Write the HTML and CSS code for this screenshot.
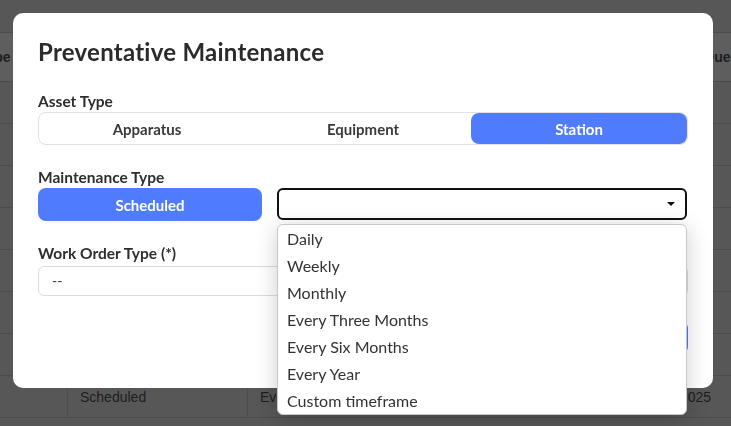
FILE: index.html
```html
<!DOCTYPE html>
<html lang="en">
<head>
    <meta charset="UTF-8">
    <meta name="viewport" content="width=device-width, initial-scale=1.0">
    <title>Preventative Maintenance</title>
    <link rel="stylesheet" href="styles.css">
</head>
<body>
    <table class="pm-table">
        <colgroup>
            <col class="col-type">
            <col class="col-maint">
            <col class="col-freq">
            <col class="col-asset">
            <col class="col-due">
        </colgroup>
        <thead>
            <tr>
                <th class="th-type">Type</th>
                <th>Maintenance</th>
                <th>Frequency</th>
                <th>Asset</th>
                <th class="th-due">Next PM Due</th>
            </tr>
        </thead>
        <tbody>
            <tr><td></td><td>Scheduled</td><td>Every Month</td><td>Engine 1</td><td>01/04/2025</td></tr>
            <tr><td></td><td>Scheduled</td><td>Every Year</td><td>Ladder 2</td><td>02/11/2025</td></tr>
            <tr><td></td><td>Scheduled</td><td>Weekly</td><td>Station 3</td><td>01/09/2025</td></tr>
            <tr><td></td><td>Scheduled</td><td>Every Six Months</td><td>SCBA Pack</td><td>03/01/2025</td></tr>
            <tr><td></td><td>Scheduled</td><td>Monthly</td><td>Rescue 5</td><td>01/20/2025</td></tr>
            <tr><td></td><td>Scheduled</td><td>Daily</td><td>Station 1</td><td>01/02/2025</td></tr>
            <tr><td></td><td>Scheduled</td><td>Every Three Months</td><td>Tanker 4</td><td>04/15/2025</td></tr>
            <tr><td></td><td>Scheduled</td><td>Every Year</td><td>Engine 7</td><td>06/30/2025</td></tr>
        </tbody>
    </table>

    <div class="modal">
        <h2 class="modal-title">Preventative Maintenance</h2>

        <label class="field-label">Asset Type</label>
        <div class="segmented">
            <button class="seg-btn">Apparatus</button>
            <button class="seg-btn">Equipment</button>
            <button class="seg-btn active">Station</button>
        </div>

        <label class="field-label mt">Maintenance Type</label>
        <div class="maint-row">
            <button class="pill-btn">Scheduled</button>
            <div class="select-wrap">
                <div class="select-box">
                    <span class="caret"></span>
                </div>
                <ul class="dropdown">
                    <li>Daily</li>
                    <li>Weekly</li>
                    <li>Monthly</li>
                    <li>Every Three Months</li>
                    <li>Every Six Months</li>
                    <li>Every Year</li>
                    <li>Custom timeframe</li>
                </ul>
            </div>
        </div>

        <label class="field-label mt wo">Work Order Type (*)</label>
        <div class="text-select">--</div>

        <div class="modal-footer">
            <button class="save-btn">Save</button>
        </div>
    </div>
</body>
</html>
```

FILE: styles.css
```css
body {
    margin: 0;
    background-color: #575757;
    font-family: "Liberation Sans", Arial, sans-serif;
    overflow: hidden;
    height: 426px;
}
.pm-table {
    border-collapse: collapse;
    table-layout: fixed;
    width: 805px;
    margin-top: 32px;
    margin-left: -37px;
    font-size: 14px;
    color: #1e1e1e;
}
.col-type { width: 104px; }
.col-maint { width: 180px; }
.col-freq { width: 201px; }
.col-asset { width: 180px; }
.col-due { width: 140px; }
.pm-table th,
.pm-table td {
    text-align: left;
    padding: 0 12px;
    border-bottom: 1px solid #4c4c4c;
    border-left: 1px solid #4c4c4c;
    white-space: nowrap;
    overflow: hidden;
}
.pm-table th {
    height: 48px;
    background-color: #5e5e5e;
    border-top: 1px solid #4c4c4c;
    font-weight: bold;
}
.pm-table th.th-type {
    padding-left: 15px;
}
.pm-table th.th-due {
    padding-left: 16px;
}
.pm-table td {
    height: 41px;
}

.modal {
    position: fixed;
    left: 13px;
    top: 13px;
    width: 650px;
    padding: 24px 25px 35px;
    background: #fff;
    border-radius: 10px;
    font-family: Lato, "Open Sans", sans-serif;
    color: #333;
}
.modal-title {
    margin: 0 0 24px;
    font-size: 24px;
    line-height: 30px;
    letter-spacing: 0.25px;
    font-weight: bold;
    color: #2b2b2b;
}
.field-label {
    display: block;
    font-size: 15.5px;
    line-height: 20px;
    font-weight: bold;
    margin-bottom: 1px;
    color: #2e2e2e;
}
.field-label.mt {
    margin-top: 22px;
}
.field-label.wo {
    margin-bottom: 3px;
}
.segmented {
    display: flex;
    border: 1px solid #e2e2e2;
    border-radius: 8px;
    height: 31px;
}
.seg-btn {
    flex: 1;
    border: none;
    background: transparent;
    font-family: Lato, sans-serif;
    font-size: 15px;
    font-weight: bold;
    color: #3a3a3a;
    border-radius: 8px;
    padding: 0;
}
.seg-btn.active {
    background-color: #4f7cff;
    color: #fff;
}
.maint-row {
    display: grid;
    grid-template-columns: 224px 1fr;
    column-gap: 15px;
}
.pill-btn {
    height: 33px;
    border: none;
    border-radius: 8px;
    background-color: #4f7cff;
    color: #fff;
    font-family: Lato, sans-serif;
    font-size: 15px;
    font-weight: bold;
    padding: 0;
}
.select-wrap {
    position: relative;
    margin-right: 1px;
}
.select-box {
    height: 28px;
    border: 2px solid #111;
    border-radius: 6px;
    display: flex;
    align-items: center;
    justify-content: flex-end;
    padding-right: 10px;
}
.caret {
    width: 0;
    height: 0;
    border-left: 4px solid transparent;
    border-right: 4px solid transparent;
    border-top: 4px solid #111;
}
.dropdown {
    position: absolute;
    top: 36px;
    left: 0;
    right: 0;
    margin: 0;
    padding: 0;
    list-style: none;
    background: #fff;
    border: 1px solid #c8c8c8;
    border-radius: 6px;
    box-shadow: 0 4px 22px rgba(0, 0, 0, 0.2);
    z-index: 5;
}
.dropdown li {
    padding: 0 9px;
    line-height: 27px;
    font-size: 16px;
    color: #333;
}
.text-select {
    height: 28px;
    border: 1px solid #dcdcdc;
    border-radius: 6px;
    padding: 0 13px;
    line-height: 28px;
    font-size: 14px;
    color: #333;
}
.modal-footer {
    display: flex;
    justify-content: flex-end;
    margin-top: 26px;
}
.save-btn {
    height: 31px;
    padding: 0 20px;
    border: none;
    border-radius: 6px;
    background-color: #4f7cff;
    color: #fff;
    font-family: Lato, sans-serif;
    font-size: 14px;
    font-weight: bold;
}
```
